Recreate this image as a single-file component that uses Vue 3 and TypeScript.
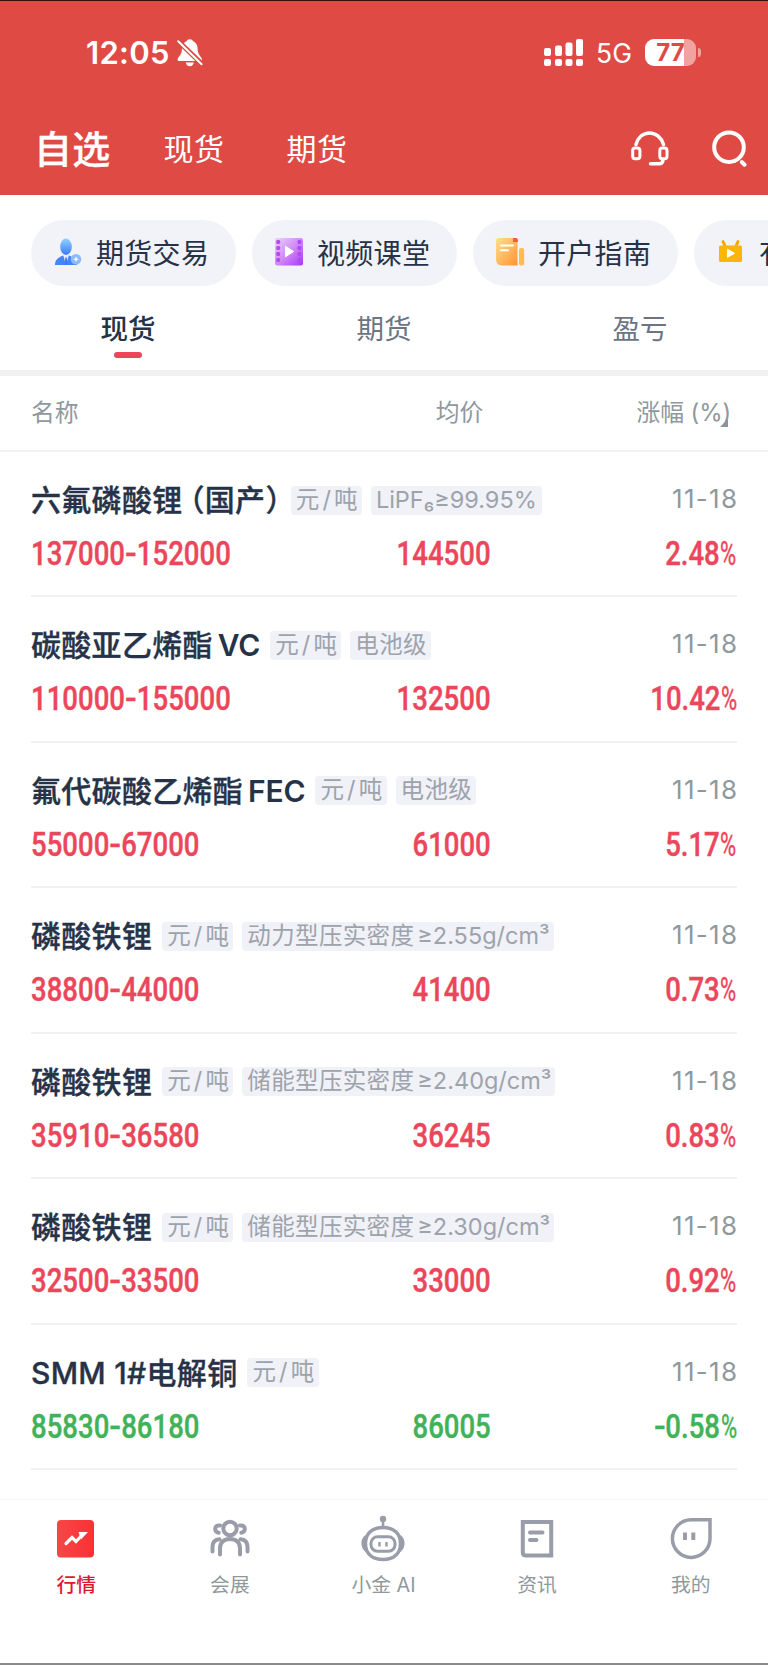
<script setup lang="ts">
interface Quote {
  title: string
  latin?: string
  tail?: string
  tags: string[]
  date: string
  range: string
  avg: string
  change: string
  down?: boolean
}

const chips = [
  { icon: 'user', text: '期货交易' },
  { icon: 'film', text: '视频课堂' },
  { icon: 'guide', text: '开户指南' },
  { icon: 'live', text: '有色直播' },
]
const tabs = ['现货', '期货', '盈亏']

const quotes: Quote[] = [
  { title: '六氟磷酸锂', tail: '国产', tags: ['LiPF₆≥99.95%'], date: '11-18', range: '137000-152000', avg: '144500', change: '2.48%' },
  { title: '碳酸亚乙烯酯', latin: 'VC', tags: ['电池级'], date: '11-18', range: '110000-155000', avg: '132500', change: '10.42%' },
  { title: '氟代碳酸乙烯酯', latin: 'FEC', tags: ['电池级'], date: '11-18', range: '55000-67000', avg: '61000', change: '5.17%' },
  { title: '磷酸铁锂', tags: ['动力型压实密度|≥2.55g/cm³'], date: '11-18', range: '38800-44000', avg: '41400', change: '0.73%' },
  { title: '磷酸铁锂', tags: ['储能型压实密度|≥2.40g/cm³'], date: '11-18', range: '35910-36580', avg: '36245', change: '0.83%' },
  { title: '磷酸铁锂', tags: ['储能型压实密度|≥2.30g/cm³'], date: '11-18', range: '32500-33500', avg: '33000', change: '0.92%' },
  { title: 'SMM 1#电解铜', tags: [], date: '11-18', range: '85830-86180', avg: '86005', change: '-0.58%', down: true },
]

const nav = [
  { icon: 'market', text: '行情' },
  { icon: 'expo', text: '会展' },
  { icon: 'robot', text: '小金 AI' },
  { icon: 'news', text: '资讯' },
  { icon: 'me', text: '我的' },
]

// Splits a figure into digit runs, dashes and percent signs, which are set differently.
function pieces(value: string): { text: string; kind: string }[] {
  return (value.match(/[\d.]+|-|%/g) ?? []).map((text) => ({
    text,
    kind: text === '-' ? 'dash' : text === '%' ? 'pct' : 'digits',
  }))
}
</script>

<template>
  <div class="screen">
    <header class="top">
      <div class="status">
        <span class="clock">12:05</span>
        <svg class="bell" width="26" height="28" viewBox="0 0 26 28">
          <path fill="#fff" d="M12.8.3c-1.700 0-2.900.8-3.200 2-3.600 1.400-4.700 4.700-4.700 8.400 0 5-4.300 7.600-4.300 9.700 0 1 .7 1.600 1.800 1.600h20.800c1.100 0 1.800-.6 1.800-1.600 0-2.100-4.300-4.700-4.300-9.700 0-3.700-1.100-7-4.700-8.400-.3-1.200-1.500-2-3.200-2zM8.800 23.500h8c-.4 2.200-1.900 3.700-4 3.700s-3.600-1.500-4-3.700z" />
          <path stroke="#df4a45" stroke-width="5" d="M.5 1.500L26 26" />
          <path stroke="#fff" stroke-width="2" stroke-linecap="round" d="M1.200 2.200L24.600 25.200" />
        </svg>
        <span class="grow"></span>
        <svg class="signal" width="40" height="28" viewBox="0 0 40 28" fill="#fff">
          <rect x="0" y="9" width="7" height="8" rx="2" /><rect x="11" y="6.500" width="7" height="10.500" rx="2" />
          <rect x="21.500" y="3.500" width="7" height="13.500" rx="2" /><rect x="32" y="0" width="7" height="17" rx="2" />
          <rect x="0" y="20" width="7" height="7" rx="2" /><rect x="11" y="20" width="7" height="7" rx="2" />
          <rect x="21.500" y="20" width="7" height="7" rx="2" /><rect x="32" y="20" width="7" height="7" rx="2" />
        </svg>
        <span class="net">5G</span>
        <div class="battery"><span>77</span></div>
        <i class="nub"></i>
      </div>
      <div class="main-tabs">
        <b>自选</b><span class="m1">现货</span><span class="m2">期货</span>
        <span class="grow"></span>
        <svg width="38" height="36" viewBox="0 0 38 36" fill="none" stroke="#fff" stroke-width="3" stroke-linecap="round">
          <path d="M5 13.500C7 6.500 12 2 18.500 2S30.500 6.500 32.500 13.500" stroke-width="3.500" />
          <rect x="1.700" y="17" width="7.200" height="10.800" rx="2.500" /><rect x="28.800" y="17" width="7.200" height="10.800" rx="2.500" />
          <path d="M32 28.500c0 3-1.300 4.300-4 4.300h-8.500" stroke-width="3.500" />
        </svg>
        <svg class="search" width="36" height="38" viewBox="0 0 36 38" fill="none" stroke="#fff" stroke-width="4">
          <circle cx="17" cy="17.200" r="14.800" /><path stroke-linecap="round" d="M29.800 32l2.800 2.700" />
        </svg>
      </div>
    </header>

    <div class="chips">
      <div v-for="c in chips" :key="c.text" class="chip">
        <svg v-if="c.icon === 'user'" width="28" height="28" viewBox="0 0 28 28">
          <defs><linearGradient id="ub" x1="0" y1="0" x2="0" y2="1"><stop offset="0" stop-color="#8ed2ff" /><stop offset="1" stop-color="#3f78fb" /></linearGradient></defs>
          <ellipse cx="12" cy="8.800" rx="5.800" ry="8.200" fill="url(#ub)" />
          <path d="M1 27c0-5 3-7.500 8-9.500l3 2 3-2c5 2 8 4.500 8 9.500z" fill="#4684f5" />
          <path d="M9.300 17.400L12 27l2.800-9.600-2.800 1.500z" fill="#e8f2ff" /><path d="M11.300 19.500h1.500l.8 7.500h-3z" fill="#3f78fb" />
          <circle cx="22" cy="21.200" r="5.300" fill="#8bbcf8" /><path d="M22 18.300l.9 2.100 2 .8-2 .8-.9 2.100-.9-2.100-2-.8 2-.8z" fill="#fff" />
        </svg>
        <svg v-else-if="c.icon === 'film'" width="30" height="28" viewBox="0 0 30 28">
          <defs><linearGradient id="fl" x1="0" y1="0" x2="1" y2="1"><stop offset="0" stop-color="#ead2fb" /><stop offset=".55" stop-color="#ce83f7" /><stop offset="1" stop-color="#a936fb" /></linearGradient></defs>
          <rect x="1" y="0" width="28" height="27.500" rx="2" fill="url(#fl)" />
          <g fill="#b34af1"><rect v-for="n in 4" :key="n" x="2.300" :y="n * 6 - 4" width="3.800" height="4" rx="1.300" /><rect v-for="n in 4" :key="'r' + n" x="23.500" :y="n * 6 - 4" width="3.800" height="4" rx="1.300" /></g>
          <path d="M11.500 8.200l8 5.300-8 5.300z" fill="#fff" stroke="#fff" stroke-linejoin="round" />
        </svg>
        <svg v-else-if="c.icon === 'guide'" width="30" height="28" viewBox="0 0 30 28">
          <defs><linearGradient id="gd" x1="0" y1="0" x2="1" y2="1"><stop offset="0" stop-color="#ffe08b" /><stop offset="1" stop-color="#ff9335" /></linearGradient></defs>
          <rect x="24" y="10" width="5.200" height="17.500" rx="2" fill="#ffbd4a" />
          <path d="M4 0h16q2.500 0 2.500 3v24.500H7Q1 27.500 1 21V3q0-3 3-3z" fill="url(#gd)" />
          <path d="M18 0h3q2 0 2 4h-5z" fill="#ee6035" />
          <path d="M6 7.500h12M6 12.200h7" stroke="#fff" stroke-width="2" stroke-linecap="round" />
        </svg>
        <svg v-else width="28" height="28" viewBox="0 0 28 28">
          <path d="M8 8L6 3.500M19 8l2-4.500" stroke="#ffa500" stroke-width="3" stroke-linecap="round" />
          <rect x="2" y="7.500" width="23" height="16.500" rx="1.500" fill="#fdb50a" /><path d="M10.500 11.300l7 4-7 4z" fill="#fff" stroke="#fff" stroke-linejoin="round" />
        </svg>
        <span>{{ c.text }}</span>
      </div>
    </div>

    <div class="tabs"><span v-for="(t, i) in tabs" :key="t" :class="{ on: i === 0 }">{{ t }}</span></div>

    <div class="thead"><span>名称</span><span class="avg-h">均价</span><span class="chg-h">涨幅 (%)<i></i></span></div>

    <main>
      <section v-for="(q, i) in quotes" :key="i" class="row" :class="{ down: q.down }">
        <div class="line">
          <h3>{{ q.title }}<template v-if="q.tail"><i class="open">（</i>{{ q.tail }}<i class="close">）</i></template><i v-if="q.latin" class="latin">{{ q.latin }}</i></h3>
          <span class="tag unit">元<i>/</i>吨</span>
          <span v-for="t in q.tags" :key="t" class="tag" :class="{ formula: i === 0 }">{{ t.split('|')[0] }}<i v-if="t.includes('|')" class="spec">{{ t.split('|')[1] }}</i></span>
          <time>{{ q.date }}</time>
        </div>
        <div class="figures">
          <div><p class="l"><span v-for="(p, k) in pieces(q.range)" :key="k" :class="p.kind">{{ p.text }}</span></p></div>
          <div><p><span>{{ q.avg }}</span></p></div>
          <div><p><span v-for="(p, k) in pieces(q.change)" :key="k" :class="p.kind">{{ p.text }}</span></p></div>
        </div>
      </section>
    </main>

    <nav>
      <a v-for="(n, i) in nav" :key="n.text" :class="{ on: i === 0 }">
        <svg width="46" height="48" viewBox="0 0 46 48" fill="none" stroke="#999da9" stroke-width="4">
          <template v-if="n.icon === 'market'">
            <defs><linearGradient id="mk"><stop offset="0" stop-color="#f64747" /><stop offset="1" stop-color="#fb3036" /></linearGradient></defs>
            <rect x="4" y="5" width="37" height="37.500" rx="4" fill="url(#mk)" stroke="none" />
            <path d="M13 28.500l6-6 4 4 7.500-8" stroke="#fff" stroke-width="3.200" stroke-linecap="round" /><path d="M25.500 17h9.500l-7 7.500z" fill="#fff" stroke="none" />
          </template>
          <g v-else-if="n.icon === 'expo'" stroke-linecap="round">
            <circle cx="23" cy="13.500" r="6.700" />
            <path d="M13 39.500v-6c0-6 3.500-9.500 10-9.500s10 3.500 10 9.500v6M13 10.500c-3-.5-4.800 1-4.800 3.300s1.500 3.700 3.500 4M33 10.500c3-.5 4.800 1 4.800 3.300s-1.500 3.700-3.500 4M5.500 36.500V32c0-5 2-7.500 7-7.800M40.500 36.500V32c0-5-2-7.500-7-7.800" />
          </g>
          <g v-else-if="n.icon === 'robot'">
            <path d="M23 12V5" stroke-width="2.600" /><circle cx="23" cy="4" r="3.200" fill="#999da9" stroke="none" />
            <path d="M6 20C.500 22.500-.500 32 5.500 37h2zM40 20c5.500 2.500 6.500 12 .5 17h-2z" fill="#999da9" stroke="none" />
            <path d="M23 12.500C12 12.500 5.500 18.500 5.500 28.500S12 44.500 23 44.500s17.500-6 17.500-16S34 12.500 23 12.500z" stroke-width="3.400" />
            <rect x="11" y="21.800" width="24" height="14.500" rx="6.500" stroke-width="3" />
            <path d="M19.500 27v4.500M26.500 27v4.500" stroke-width="2.400" />
          </g>
          <g v-else-if="n.icon === 'news'">
            <path d="M8.800 7h28.400v33.500H12q-3.200 0-3.200-3.200z" />
            <path d="M16 17.500h12.500M16 25h6.500" stroke-linecap="round" />
          </g>
          <g v-else>
            <path d="M23 4.800h19v19.200a18.800 18.800 0 1 1-19-19.200z" stroke-width="3.500" />
            <path d="M17 17.500V25M25.300 17.500V25" />
          </g>
        </svg>
        <span>{{ n.text }}</span>
      </a>
    </nav>
  </div>
</template>

<style>
body { background: #fff; }
</style>

<style scoped>
* { box-sizing: border-box; }
.screen { width: 768px; height: 1665px; overflow: hidden; display: flex; flex-direction: column; background: #fff; border-bottom: 2px solid #8a8a8a; font-family: Inter, "Noto Sans CJK SC", sans-serif; color: #263248; }
i { font-style: normal; }
.grow { flex: 1; }
.top { height: 195px; flex: none; background: #df4a45; border-top: 1px solid #35100f; color: #fff; }
.status { height: 103px; padding: 0 67px 0 86px; display: flex; align-items: center; }
.clock { font-size: 31px; font-weight: 600; letter-spacing: .3px; }
.bell { margin-left: 7px; }
.signal { margin-right: 12px; }
.net { font-size: 26.500px; margin-right: 13px; }
.battery { width: 51px; height: 27px; border-radius: 9px; background: linear-gradient(90deg, #fff 77%, #f0a3a1 77%); color: #df4a45; font-size: 24px; font-weight: 700; line-height: 27px; text-align: center; }
.nub { width: 3px; height: 9px; margin-left: 2px; border-radius: 0 4px 4px 0; background: #f0a3a1; }
.main-tabs { height: 89px; padding: 0 20px 0 34px; display: flex; align-items: center; }
.main-tabs b, .main-tabs .m1, .main-tabs .m2 { margin-top: -4px; }
.main-tabs b { font-size: 38px; font-weight: 500; letter-spacing: .3px; -webkit-text-stroke: .3px; }
.main-tabs span { font-size: 30px; letter-spacing: .5px; }
.m1 { margin-left: 53px; }
.m2 { margin-left: 62px; }
.search { margin-left: 43px; }
.chips { height: 107px; flex: none; padding: 25px 0 0 31px; display: flex; gap: 16px; }
.chip { flex: none; width: 205px; height: 66px; padding: 0 0 2px 22px; border-radius: 33px; background: #f2f3f8; display: flex; align-items: center; font-size: 28px; letter-spacing: .3px; white-space: nowrap; }
.chip svg { width: 30px; flex: none; margin-right: 13px; }
.tabs { height: 74px; flex: none; display: flex; border-bottom: 6px solid #f1f1f1; }
.tabs span { flex: 1; display: flex; flex-direction: column; align-items: center; font-size: 27.500px; line-height: 54px; color: #6d7482; }
.tabs .on { color: #263248; font-weight: 500; }
.tabs .on::after { content: ""; width: 28px; height: 6px; border-radius: 3px; background: #ec465b; margin-top: -4px; }
.thead { height: 76px; flex: none; padding: 0 37px 6px 31px; display: flex; align-items: center; justify-content: space-between; border-bottom: 2px solid #f1f1f3; font-size: 23.800px; color: #8f999d; }
.avg-h { margin-left: 204px; }
.chg-h { position: relative; letter-spacing: -.1px; }
.chg-h i { position: absolute; right: 3px; bottom: 1px; border-left: 8px solid transparent; border-bottom: 8px solid #8b93a0; }
.row { height: 145.430px; margin: 0 31px; border-bottom: 2px solid #f1f1f3; padding-top: 29px; }
.line { height: 38px; display: flex; align-items: center; }
h3 { margin: 0 10px 0 0; font-size: 30px; line-height: 38px; letter-spacing: .3px; font-weight: 500; -webkit-text-stroke: .35px; white-space: nowrap; }
.open, .close { font-feature-settings: "halt"; }
.open { margin-left: 7px; }
.latin { margin-left: 5px; font-weight: 600; letter-spacing: -.2px; -webkit-text-stroke: 0; }
.tag { height: 29px; margin: 0 9px 0 0; padding: 0 4px 0 5px; border-radius: 4px; background: #f1f1f8; color: #9da3ab; font-size: 23.500px; line-height: 28px; letter-spacing: .35px; white-space: nowrap; }
.formula { letter-spacing: 0; padding-right: 5px; }
.unit i { margin: 0 2.800px; }
.spec { margin-left: 3px; letter-spacing: 0; }
time { margin: 0 -1.300px 0 auto; font-size: 26px; line-height: 34px; letter-spacing: 1.300px; color: #8f999d; position: relative; top: -1px; }
.figures { display: grid; grid-template-columns: 230px 230px 1fr; margin-top: 15px; color: #ec465b; font-family: Roboto, sans-serif; font-size: 33px; line-height: 40px; font-weight: 500; -webkit-text-stroke: .4px; }
.figures div { display: flex; justify-content: flex-end; }
.figures div:first-child { justify-content: flex-start; }
.figures p { margin: 0; white-space: nowrap; transform: scaleX(.835); transform-origin: right; }
.figures .l { transform-origin: left; }
.dash { display: inline-block; transform: scaleX(1.25); margin: 0 1.500px; }
.pct { display: inline-block; font-weight: 400; transform: scaleX(.8); transform-origin: right; margin-left: -4px; }
.down .figures { color: #41b257; }
nav { height: 164px; margin-top: auto; flex: none; border-top: 1px solid #f5f5f6; display: flex; background: #fff; }
nav a { flex: 1; display: flex; flex-direction: column; align-items: center; padding: 15px 1px 0 0; font-size: 19.800px; color: #8f999d; }
nav a span { line-height: 28px; margin-top: 8px; }
nav .on { color: #dc1930; font-weight: 500; }
</style>
